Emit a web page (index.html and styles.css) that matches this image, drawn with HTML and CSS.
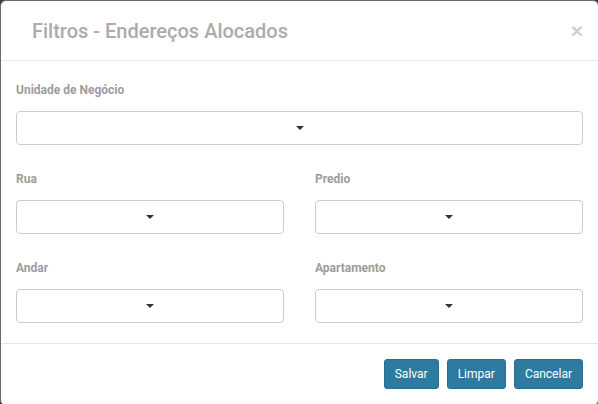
FILE: index.html
```html
<!DOCTYPE html>
<html lang="pt">
<head>
<meta charset="utf-8">
<title>Filtros - Endereços Alocados</title>
<link rel="stylesheet" href="styles.css">
</head>
<body>
<div class="modal">
  <div class="modal-header">
    <h4 class="modal-title">Filtros - Endereços Alocados</h4>
    <button class="close" type="button">&times;</button>
  </div>
  <div class="modal-body">
    <div class="group">
      <label class="label">Unidade de Negócio</label>
      <div class="select"><span class="caret"></span></div>
    </div>
    <div class="row group">
      <div class="col">
        <label class="label">Rua</label>
        <div class="select"><span class="caret"></span></div>
      </div>
      <div class="col">
        <label class="label">Predio</label>
        <div class="select"><span class="caret"></span></div>
      </div>
    </div>
    <div class="row group last">
      <div class="col">
        <label class="label">Andar</label>
        <div class="select"><span class="caret"></span></div>
      </div>
      <div class="col">
        <label class="label">Apartamento</label>
        <div class="select"><span class="caret"></span></div>
      </div>
    </div>
  </div>
  <div class="modal-footer">
    <button class="btn" type="button">Salvar</button>
    <button class="btn" type="button">Limpar</button>
    <button class="btn" type="button">Cancelar</button>
  </div>
</div>
</body>
</html>
```
FILE: styles.css
```css
html, body {
  margin: 0;
  padding: 0;
  height: 100%;
  overflow: hidden;
}
body {
  background: #3c3c3c;
  font-family: Roboto, "Liberation Sans", Arial, sans-serif;
}
.modal {
  box-sizing: border-box;
  width: 599px;
  height: 406px;
  background: #fff;
  border: 1px solid #6a6a6a;
  border-radius: 6px;
}
.modal-header {
  display: flex;
  align-items: center;
  justify-content: space-between;
  height: 59px;
  box-sizing: content-box;
  padding: 0 15px 0 31px;
  border-bottom: 1px solid #e5e5e5;
}
.modal-title {
  margin: 0;
  font-size: 20px;
  font-weight: 500;
  line-height: 28px;
  color: #ababab;
}
.close {
  margin: 0;
  padding: 0;
  border: 0;
  background: none;
  font-family: "Liberation Sans", Arial, sans-serif;
  font-size: 21px;
  font-weight: bold;
  line-height: 28px;
  color: #cfcfcf;
}
.modal-body {
  padding: 21px 15px 20px 15px;
}
.group {
  margin-bottom: 26px;
}
.group.last {
  margin-bottom: 0;
}
.row {
  display: grid;
  grid-template-columns: 1fr 1fr;
  column-gap: 31px;
}
.label {
  display: block;
  font-size: 12px;
  font-weight: bold;
  line-height: 17px;
  color: #9c9c9c;
  margin-bottom: 12px;
}
.select {
  box-sizing: border-box;
  height: 34px;
  border: 1px solid #cccccc;
  border-radius: 4px;
  display: flex;
  align-items: center;
  justify-content: center;
}
.caret {
  width: 0;
  height: 0;
  border-left: 4px solid transparent;
  border-right: 4px solid transparent;
  border-top: 4px solid #333;
}
.modal-footer {
  border-top: 1px solid #e5e5e5;
  padding: 15px 15px 0 15px;
  display: flex;
  justify-content: flex-end;
  gap: 8px;
}
.btn {
  height: 30px;
  padding: 0 10px;
  border: 1px solid #2a6f92;
  border-radius: 3px;
  background: #2e7ba1;
  color: #fff;
  font-family: Roboto, "Liberation Sans", Arial, sans-serif;
  font-size: 12px;
  line-height: 28px;
}
```
